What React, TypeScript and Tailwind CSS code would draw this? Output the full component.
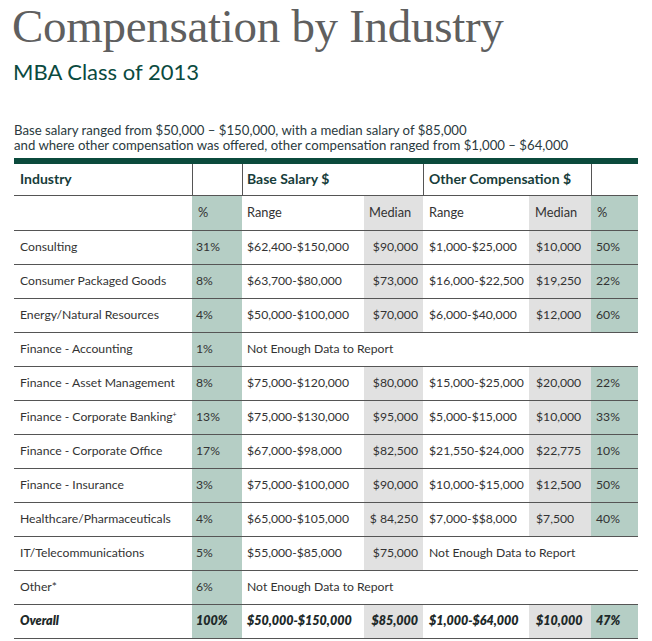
import React from "react";

type Row = {
  industry: React.ReactNode;
  pct: string;
  baseRange?: string;
  baseMedian?: string;
  otherRange?: string;
  otherMedian?: string;
  otherPct?: string;
  overall?: boolean;
};

const rows: Row[] = [
  { industry: "Consulting", pct: "31%", baseRange: "$62,400-$150,000", baseMedian: "$90,000", otherRange: "$1,000-$25,000", otherMedian: "$10,000", otherPct: "50%" },
  { industry: "Consumer Packaged Goods", pct: "8%", baseRange: "$63,700-$80,000", baseMedian: "$73,000", otherRange: "$16,000-$22,500", otherMedian: "$19,250", otherPct: "22%" },
  { industry: "Energy/Natural Resources", pct: "4%", baseRange: "$50,000-$100,000", baseMedian: "$70,000", otherRange: "$6,000-$40,000", otherMedian: "$12,000", otherPct: "60%" },
  { industry: "Finance - Accounting", pct: "1%" },
  { industry: "Finance - Asset Management", pct: "8%", baseRange: "$75,000-$120,000", baseMedian: "$80,000", otherRange: "$15,000-$25,000", otherMedian: "$20,000", otherPct: "22%" },
  {
    industry: (
      <>
        Finance - Corporate Banking<sup className="text-[7px] align-[5px]">+</sup>
      </>
    ),
    pct: "13%", baseRange: "$75,000-$130,000", baseMedian: "$95,000", otherRange: "$5,000-$15,000", otherMedian: "$10,000", otherPct: "33%",
  },
  { industry: "Finance - Corporate Office", pct: "17%", baseRange: "$67,000-$98,000", baseMedian: "$82,500", otherRange: "$21,550-$24,000", otherMedian: "$22,775", otherPct: "10%" },
  { industry: "Finance - Insurance", pct: "3%", baseRange: "$75,000-$100,000", baseMedian: "$90,000", otherRange: "$10,000-$15,000", otherMedian: "$12,500", otherPct: "50%" },
  { industry: "Healthcare/Pharmaceuticals", pct: "4%", baseRange: "$65,000-$105,000", baseMedian: "$ 84,250", otherRange: "$7,000-$$8,000", otherMedian: "$7,500", otherPct: "40%" },
  { industry: "IT/Telecommunications", pct: "5%", baseRange: "$55,000-$85,000", baseMedian: "$75,000" },
  { industry: "Other*", pct: "6%" },
  { industry: "Overall", pct: "100%", baseRange: "$50,000-$150,000", baseMedian: "$85,000", otherRange: "$1,000-$64,000", otherMedian: "$10,000", otherPct: "47%", overall: true },
];

const grid = "grid grid-cols-[178px_50px_122px_59px_106px_62px_47px]";
const teal = "bg-[#b5cec5]";
const gray = "bg-[#e1e1e1]";
const noData = "Not Enough Data to Report";

function DataRow({ row }: { row: Row }) {
  const cell = "flex items-center h-full whitespace-nowrap";
  return (
    <div
      className={`${grid} h-[34px] border-b border-[#555] ${
        row.overall ? "font-extrabold italic text-[12.5px] text-[#1e2a2a]" : ""
      }`}
    >
      <div className={`${cell} pl-[6px]`}>{row.industry}</div>
      <div className={`${cell} ${teal} pl-[4px]`}>{row.pct}</div>
      {row.baseRange ? (
        <>
          <div className={`${cell} pl-[5px]`}>{row.baseRange}</div>
          <div className={`${cell} ${gray} justify-end pr-[5px]`}>{row.baseMedian}</div>
          {row.otherRange ? (
            <>
              <div className={`${cell} pl-[6px]`}>{row.otherRange}</div>
              <div className={`${cell} ${gray} pl-[7px]`}>{row.otherMedian}</div>
              <div className={`${cell} ${teal} pl-[5px]`}>{row.otherPct}</div>
            </>
          ) : (
            <div className={`${cell} col-span-3 pl-[6px]`}>{noData}</div>
          )}
        </>
      ) : (
        <div className={`${cell} col-span-5 pl-[5px]`}>{noData}</div>
      )}
    </div>
  );
}

export default function App() {
  return (
    <div className="w-[652px] h-[641px] bg-white overflow-hidden font-['Lato','Noto_Sans',sans-serif] text-[12.2px] text-[#333]">
      {/* title */}
      <h1 className="pl-[12px] font-['Liberation_Serif','Times_New_Roman',serif] text-[47px] leading-[52px] tracking-[-0.3px] text-[#5f5f5f]">
        Compensation by Industry
      </h1>
      <h2 className="mt-[7px] pl-[13px] text-[22px] leading-[26px] text-[#0b4a40]">
        MBA Class of 2013
      </h2>

      {/* intro */}
      <div className="mt-[38px] ml-[14px] text-[13.2px] leading-[15px] text-[#2b3a40]">
        <p>Base salary ranged from $50,000 – $150,000, with a median salary of $85,000</p>
        <p>and where other compensation was offered, other compensation ranged from $1,000 – $64,000</p>
      </div>

      {/* table */}
      <div className="mt-[5px] ml-[14px] w-[624px]">
        <div className="h-[6px] bg-[#0b4a3c]" />

        {/* group header */}
        <div className={`${grid} h-[32px] border-b border-[#555] font-bold text-[14px] text-[#173d3a]`}>
          <div className="flex items-center pl-[6px] pb-[3px]">Industry</div>
          <div className="border-l border-[#555]" />
          <div className="col-span-2 flex items-center border-l border-[#555] pl-[4px] pb-[3px]">
            Base Salary $
          </div>
          <div className="col-span-2 flex items-center border-l border-[#555] pl-[5px] pb-[3px]">
            Other Compensation $
          </div>
          <div className="border-l border-[#555]" />
        </div>

        {/* sub header */}
        <div className={`${grid} h-[35px] border-b border-[#555] text-[12.8px]`}>
          <div />
          <div className={`flex items-center ${teal} pl-[6px]`}>%</div>
          <div className="flex items-center pl-[5px]">Range</div>
          <div className={`flex items-center ${gray} pl-[5px]`}>Median</div>
          <div className="flex items-center pl-[6px]">Range</div>
          <div className={`flex items-center ${gray} pl-[6px]`}>Median</div>
          <div className={`flex items-center ${teal} pl-[6px]`}>%</div>
        </div>

        {rows.map((row, i) => (
          <DataRow key={i} row={row} />
        ))}
      </div>
    </div>
  );
}
